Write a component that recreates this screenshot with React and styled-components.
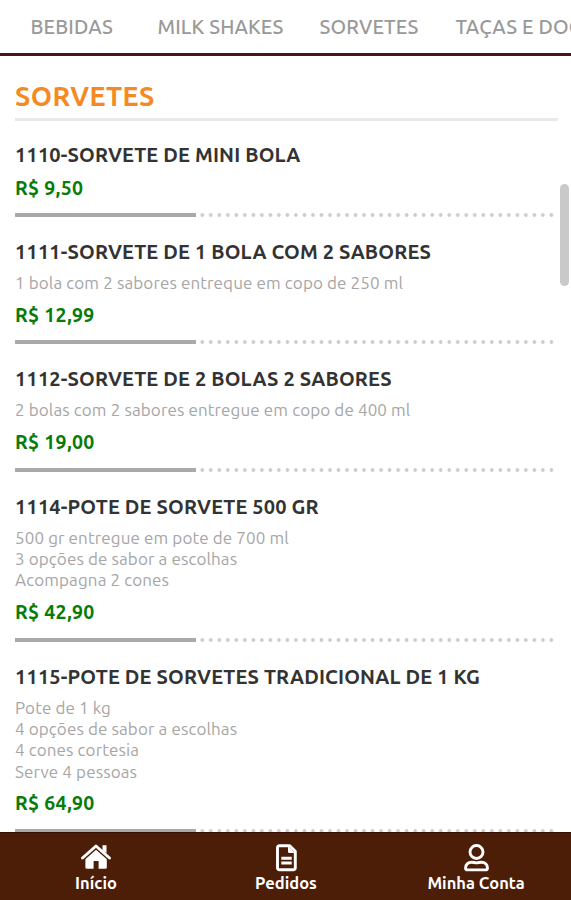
import React from "react";
import styled, { createGlobalStyle } from "styled-components";

const GlobalStyle = createGlobalStyle`
    * {
        box-sizing: border-box;
    }
    body {
        margin: 0;
        background: #fff;
        font-family: Ubuntu, "Noto Sans", sans-serif;
    }
`;

const Page = styled.div`
    display: flex;
    flex-direction: column;
    height: 900px;
    overflow: hidden;
`;

const Categories = styled.nav`
    display: flex;
    flex: none;
    height: 56px;
    padding-left: 30.5px;
    border-bottom: 3px solid #4a1518;
    overflow: hidden;
`;

const Category = styled.a`
    flex: none;
    width: ${props => props.$width}px;
    line-height: 54px;
    font-size: 20px;
    font-weight: 500;
    letter-spacing: 0.14px;
    white-space: nowrap;
    color: #999;
`;

const Content = styled.main`
    display: flex;
    flex: 1;
    min-height: 0;
    overflow: hidden;
`;

const Menu = styled.section`
    width: 543px;
    margin-left: 15px;
`;

const Heading = styled.h1`
    height: 65px;
    margin: 0 0 -1.5px;
    padding-top: 22px;
    border-bottom: 3px solid #e9e9e9;
    line-height: 36px;
    font-size: 27px;
    font-weight: 600;
    letter-spacing: 0.4px;
    color: #f58a24;
`;

const Product = styled.article`
    padding-top: 23px;
`;

const Title = styled.h2`
    margin: 0;
    line-height: 24px;
    font-size: 20px;
    font-weight: 600;
    letter-spacing: 0.16px;
    white-space: nowrap;
    color: #333;
`;

const Description = styled.div`
    margin-top: 8.1px;
`;

const Line = styled.p`
    margin: 0;
    line-height: 21.4px;
    font-size: 17px;
    letter-spacing: 0.12px;
    white-space: nowrap;
    color: #a6a6a6;
`;

const Price = styled.div`
    margin-top: 9px;
    line-height: 24px;
    font-size: 19.5px;
    font-weight: 700;
    letter-spacing: 0.3px;
    color: #087c08;
`;

const Divider = styled.div`
    display: flex;
    height: 4px;
    margin-top: 13.7px;
    &::before {
        content: "";
        width: 180.5px;
        background: #a9a9a9;
    }
    &::after {
        content: "";
        width: 358px;
        margin-left: 2.6px;
        background: radial-gradient(circle, #ccc 1.5px, transparent 2.2px) 0 0 / 8.52px 4px repeat-x;
    }
`;

const ScrollThumb = styled.div`
    width: 9px;
    height: 102px;
    margin: 128px 0 0 2px;
    border-radius: 5px;
    background: #c9c9c9;
`;

const BottomBar = styled.footer`
    display: grid;
    flex: none;
    grid-template-columns: repeat(3, 1fr);
    height: 68px;
    padding-left: 1px;
    background: #4c1d07;
    border-top: 1px solid #350e05;
`;

const Tab = styled.a`
    display: flex;
    flex-direction: column;
    align-items: center;
    padding-top: 11px;
    color: #fff;
`;

const TabIcon = styled.svg`
    display: block;
    height: 28px;
    overflow: visible;
`;

const TabLabel = styled.span`
    line-height: 22px;
    font-size: 16.5px;
    font-weight: 600;
`;

const categories = [
    { name: "BEBIDAS", width: 127 },
    { name: "MILK SHAKES", width: 162 },
    { name: "SORVETES", width: 136 },
    { name: "TAÇAS E DOCES", width: 180 },
];

const products = [
    { title: "1110-SORVETE DE MINI BOLA", lines: [], price: "R$ 9,50" },
    {
        title: "1111-SORVETE DE 1 BOLA COM 2 SABORES",
        lines: ["1 bola com 2 sabores entreque em copo de 250 ml"],
        price: "R$ 12,99",
    },
    {
        title: "1112-SORVETE DE 2 BOLAS 2 SABORES",
        lines: ["2 bolas com 2 sabores entregue em copo de 400 ml"],
        price: "R$ 19,00",
    },
    {
        title: "1114-POTE DE SORVETE 500 GR",
        lines: ["500 gr entregue em pote de 700 ml", "3 opções de sabor a escolhas", "Acompagna 2 cones"],
        price: "R$ 42,90",
    },
    {
        title: "1115-POTE DE SORVETES TRADICIONAL DE 1 KG",
        lines: ["Pote de 1 kg", "4 opções de sabor a escolhas", "4 cones cortesia", "Serve 4 pessoas"],
        price: "R$ 64,90",
    },
];

const HomeIcon = () => (
    <TabIcon width="30" viewBox="0 0 30 28">
        <path d="M1.5 14 L15 2 L28.5 14" fill="none" stroke="#fff" strokeWidth="3" strokeLinecap="round" strokeLinejoin="round" />
        <path d="M21.5 1.2 H25.5 V9.5 L21.5 6 Z" fill="#fff" />
        <path d="M15 5.8 L25.8 15.3 V23.4 A1.3 1.3 0 0 1 24.5 24.7 H17.6 V17 H12.6 V24.7 H5.7 A1.3 1.3 0 0 1 4.4 23.4 V15.3 Z" fill="#fff" />
    </TabIcon>
);

const OrdersIcon = () => (
    <TabIcon width="21" viewBox="0 0 21 28">
        <path d="M3.3 1.7 H13.7 L19.3 7.3 V24 A1.8 1.8 0 0 1 17.5 25.8 H3.3 A1.8 1.8 0 0 1 1.5 24 V3.5 A1.8 1.8 0 0 1 3.3 1.7 Z" fill="none" stroke="#fff" strokeWidth="2.9" strokeLinejoin="round" />
        <path d="M12 2 L19 9 H13.5 A1.5 1.5 0 0 1 12 7.5 Z" fill="#fff" />
        <path d="M5.3 14.3 H15.7 M5.3 18.9 H15.7" stroke="#fff" strokeWidth="3" />
    </TabIcon>
);

const AccountIcon = () => (
    <TabIcon width="25" viewBox="0 0 25 28">
        <g fill="none" stroke="#fff" strokeWidth="2.9" strokeLinejoin="round">
            <circle cx="12.5" cy="8" r="6.5" />
            <path d="M7.8 18.2 C3.8 18.2 1.6 20.8 1.6 23.8 V24.4 A1.5 1.5 0 0 0 3.1 25.9 H21.9 A1.5 1.5 0 0 0 23.4 24.4 V23.8 C23.4 20.8 21.2 18.2 17.2 18.2 C15.5 18.2 14.5 18.9 12.5 18.9 C10.5 18.9 9.5 18.2 7.8 18.2 Z" />
        </g>
    </TabIcon>
);

const tabs = [
    { label: "Início", Icon: HomeIcon },
    { label: "Pedidos", Icon: OrdersIcon },
    { label: "Minha Conta", Icon: AccountIcon },
];

const App = () => {
    return (
        <>
            <GlobalStyle />
            <Page>
                <Categories>
                    {categories.map(item =>
                        <Category key={item.name} $width={item.width}>{item.name}</Category>)
                    }
                </Categories>
                <Content>
                    <Menu>
                        <Heading>SORVETES</Heading>
                        {products.map(product =>
                            <Product key={product.title}>
                                <Title>{product.title}</Title>
                                {product.lines.length > 0 &&
                                    <Description>
                                        {product.lines.map(line => <Line key={line}>{line}</Line>)}
                                    </Description>
                                }
                                <Price>{product.price}</Price>
                                <Divider />
                            </Product>)
                        }
                    </Menu>
                    <ScrollThumb />
                </Content>
                <BottomBar>
                    {tabs.map(({ label, Icon }) =>
                        <Tab key={label}>
                            <Icon />
                            <TabLabel>{label}</TabLabel>
                        </Tab>)
                    }
                </BottomBar>
            </Page>
        </>
    )
}
export default App
